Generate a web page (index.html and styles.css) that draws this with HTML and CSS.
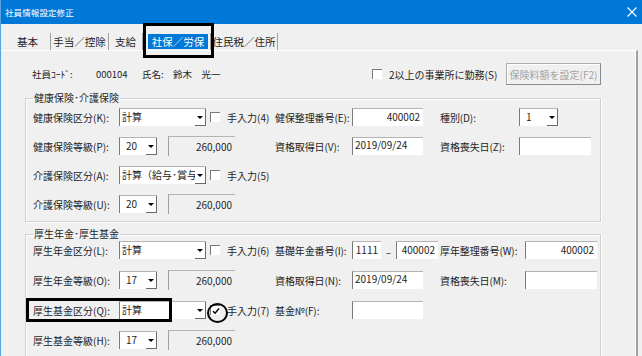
FILE: index.html
```html
<!DOCTYPE html>
<html lang="ja">

<head>
    <meta charset="UTF-8">
    <title>社員情報設定修正</title>
    <link rel="stylesheet" href="styles.css">
</head>

<body>
    <div class="window">
        <div class="titlebar">
            <span class="title">社員情報設定修正</span>
            <svg class="close" width="10" height="10" viewBox="0 0 10 10">
                <path d="M0.5 0.5 L9.5 9.5 M9.5 0.5 L0.5 9.5" stroke="#fff" stroke-width="1.1" fill="none" />
            </svg>
        </div>

        <div class="tabs">
            <span class="tab tab-kihon">基本</span>
            <span class="tab tab-teate">手当／控除</span>
            <span class="tab tab-shikyu">支給</span>
            <span class="tab tab-shaho"><span class="tab-sel">社保／労保</span></span>
            <span class="tab tab-jumin">住民税／住所</span>
        </div>

        <div class="page">
            <div class="info">
                <span class="info-key">社員ｺｰﾄﾞ:</span>
                <span class="info-code">000104</span>
                <span class="info-namekey">氏名:</span>
                <span class="info-name">鈴木　光一</span>
                <span class="chk"><span class="box"></span>2以上の事業所に勤務(S)</span>
                <button class="btn" disabled>保険料額を設定(F2)</button>
            </div>

            <!-- 健康保険・介護保険 -->
            <fieldset class="group group-health">
                <legend>健康保険･介護保険</legend>
                <div class="rows">
                    <div class="row">
                        <span class="lbl">健康保険区分(K):</span>
                        <span class="combo wide"><span class="val">計算</span><span class="drop"></span></span>
                        <span class="chk chk-cell"><span class="box"></span>手入力(4)</span>
                        <span class="lbl2">健保整理番号(E):</span>
                        <span class="txt num w71">400002</span>
                        <span class="lbl3">種別(D):</span>
                        <span class="combo kind"><span class="val">1</span><span class="drop"></span></span>
                    </div>
                    <div class="row">
                        <span class="lbl">健康保険等級(P):</span>
                        <span class="combo narrow"><span class="val">20</span><span class="drop"></span></span>
                        <span class="ro">260,000</span>
                        <span class="lbl2 after-ro">資格取得日(V):</span>
                        <span class="txt w71">2019/09/24</span>
                        <span class="lbl3">資格喪失日(Z):</span>
                        <span class="txt w72"></span>
                    </div>
                    <div class="row">
                        <span class="lbl">介護保険区分(A):</span>
                        <span class="combo wide"><span class="val">計算（給与･賞与）</span><span class="drop"></span></span>
                        <span class="chk chk-cell"><span class="box"></span>手入力(5)</span>
                    </div>
                    <div class="row">
                        <span class="lbl">介護保険等級(U):</span>
                        <span class="combo narrow"><span class="val">20</span><span class="drop"></span></span>
                        <span class="ro">260,000</span>
                    </div>
                </div>
            </fieldset>

            <!-- 厚生年金・厚生基金 -->
            <fieldset class="group group-pension">
                <legend>厚生年金･厚生基金</legend>
                <div class="rows">
                    <div class="row">
                        <span class="lbl">厚生年金区分(L):</span>
                        <span class="combo wide"><span class="val">計算</span><span class="drop"></span></span>
                        <span class="chk chk-cell"><span class="box"></span>手入力(6)</span>
                        <span class="lbl2">基礎年金番号(I):</span>
                        <span class="txt num w29">1111</span>
                        <span class="dash">–</span>
                        <span class="txt num w42">400002</span>
                        <span class="lbl3 lbl3-wide lbl3-tight">厚年整理番号(W):</span>
                        <span class="txt num w72">400002</span>
                    </div>
                    <div class="row">
                        <span class="lbl">厚生年金等級(O):</span>
                        <span class="combo narrow"><span class="val">17</span><span class="drop"></span></span>
                        <span class="ro">260,000</span>
                        <span class="lbl2 after-ro">資格取得日(N):</span>
                        <span class="txt w71">2019/09/24</span>
                        <span class="lbl3 lbl3-wide">資格喪失日(M):</span>
                        <span class="txt w72"></span>
                    </div>
                    <div class="row">
                        <span class="lbl">厚生基金区分(Q):</span>
                        <span class="combo wide"><span class="val">計算</span><span class="drop"></span></span>
                        <span class="chk chk-cell">
                            <span class="box">
                                <svg width="8" height="8" viewBox="0 0 8 8">
                                    <path d="M1 4.2 L3.1 6.3 L7 1.5" stroke="#000" stroke-width="1.4" fill="none" />
                                </svg>
                            </span>手入力(7)
                        </span>
                        <span class="lbl2">基金№(F):</span>
                        <span class="txt w71"></span>
                    </div>
                    <div class="row">
                        <span class="lbl">厚生基金等級(H):</span>
                        <span class="combo narrow"><span class="val">17</span><span class="drop"></span></span>
                        <span class="ro">260,000</span>
                    </div>
                </div>
            </fieldset>
        </div>

        <!-- 注記の枠 -->
        <div class="mark mark-tab"></div>
        <div class="mark mark-kikin"></div>
        <div class="mark mark-circle"></div>
    </div>
</body>

</html>
```

FILE: styles.css
```css
body {
    margin: 0;
    background: #f0f0f0;
    font-family: "Noto Sans CJK JP", "Noto Sans", sans-serif;
    font-size: 10px;
    color: #1e1e1e;
}

.window {
    position: relative;
    width: 641px;
    height: 356px;
    overflow: hidden;
    border-left: 1px solid #5aa2e0;
    background: #f0f0f0;
}

/* タイトルバー */
.titlebar {
    display: flex;
    align-items: center;
    justify-content: space-between;
    height: 24px;
    padding: 0 5px 0 4px;
    background: #0078d7;
    color: #fff;
}

.title {
    font-size: 8.5px;
    letter-spacing: 0.1px;
}

/* タブ */
.tabs {
    display: flex;
    height: 17px;
    margin-top: 9px;
    padding-left: 4px;
    line-height: 17px;
    font-size: 10.5px;
}

.tab {
    box-sizing: border-box;
    border-right: 1px solid #a0a0a0;
    text-align: center;
}

.tab-kihon { width: 46px; }
.tab-teate { width: 58px; }
.tab-shikyu { width: 34px; }
.tab-shaho { width: 68px; padding-left: 3px; }
.tab-jumin { width: 67px; }

.tab-sel {
    display: inline-block;
    padding: 0 4px;
    line-height: 15px;
    background: #0078d7;
    color: #fff;
}

/* タブページ */
.page {
    width: 635px;
    height: 305px;
    border-top: 1px solid #fff;
    border-right: 2px solid #a0a0a0;
    box-shadow: inset -1px 0 0 #fff;
}

.info {
    display: flex;
    align-items: center;
    height: 22px;
    padding: 12px 0 0 31px;
    font-size: 9.5px;
}

.info-key { width: 64px; }
.info-code { width: 46px; }
.info-namekey { width: 31px; }
.info-name { width: 199px; }

.info .chk {
    font-size: 10px;
}

.btn {
    box-sizing: border-box;
    width: 95px;
    height: 22px;
    margin: 0 35px 0 auto;
    padding: 0;
    border: 1px solid #adadad;
    border-right-color: #8a8a8a;
    border-bottom-color: #8a8a8a;
    box-shadow: inset 1px 1px 0 #fff;
    background: #f0f0f0;
    color: #a3a3a3;
    font-family: inherit;
    font-size: 10px;
}

/* グループ枠 */
.group {
    box-sizing: border-box;
    width: 576px;
    min-width: 0;
    margin: 6px 0 0 24px;
    padding: 0 0 8px 7px;
    border: 1px solid #d0d0d0;
    box-shadow: inset 1px 1px 0 #fff, 1px 1px 0 #fff;
}

.group legend {
    padding: 0 1px;
    line-height: 14px;
}

.group-pension {
    margin-top: 5px;
}

.rows {
    display: flex;
    flex-direction: column;
    gap: 11px;
    padding-top: 3px;
}

.group-pension .rows {
    gap: 12px;
    padding-top: 0;
}

.row {
    display: flex;
    align-items: center;
    height: 18px;
    white-space: nowrap;
}

.lbl { width: 86px; flex: none; }
.lbl2 { width: 77px; flex: none; }
.lbl2.after-ro { margin-left: 40px; }
.lbl3 { width: 79px; margin-left: 17px; flex: none; }
.lbl3.lbl3-wide { width: 85px; }
.lbl3.lbl3-tight { margin-left: 2px; }

.row .lbl2,
.row .lbl3 {
    letter-spacing: -0.1px;
}

/* コンボボックス */
.combo {
    display: flex;
    box-sizing: border-box;
    height: 18px;
    flex: none;
    background: #fff;
    border-left: 1px solid #7a7a7a;
    border-top: 1px solid #b4b4b4;
}

.combo .val {
    flex: 1;
    overflow: hidden;
    padding-left: 2px;
    line-height: 15px;
}

.combo.narrow .val,
.combo.kind .val {
    padding-left: 6px;
}

.drop {
    display: flex;
    align-items: center;
    justify-content: center;
    box-sizing: border-box;
    width: 11px;
    flex: none;
    border-right: 1px solid #6a6a6a;
    border-bottom: 1px solid #6a6a6a;
}

.drop::before {
    content: "";
    border-left: 3px solid transparent;
    border-right: 3px solid transparent;
    border-top: 3px solid #000;
}

.wide { width: 87px; }
.narrow { width: 38px; }
.kind { width: 39px; }

/* 読み取り専用 */
.ro {
    box-sizing: border-box;
    width: 67px;
    height: 20px;
    margin-left: 11px;
    flex: none;
    padding-right: 3px;
    border-left: 1px solid #a0a0a0;
    border-top: 1px solid #b4b4b4;
    text-align: right;
    line-height: 19px;
}

/* テキストボックス */
.txt {
    box-sizing: border-box;
    height: 18px;
    flex: none;
    padding: 0 2px;
    background: #fff;
    border-left: 1px solid #7a7a7a;
    border-top: 1px solid #b4b4b4;
    line-height: 14px;
}

.txt.num {
    text-align: right;
    padding-right: 3px;
    line-height: 16px;
}

.w29 { width: 29px; }
.w42 { width: 42px; }
.w71 { width: 71px; }
.w72 { width: 72px; }

.dash {
    width: 15px;
    flex: none;
    text-align: center;
    padding-top: 3px;
}

/* チェックボックス */
.chk {
    display: flex;
    align-items: center;
}

.chk-cell {
    box-sizing: border-box;
    width: 69px;
    padding-left: 4px;
    flex: none;
}

.box {
    display: flex;
    align-items: center;
    justify-content: center;
    box-sizing: border-box;
    width: 10px;
    height: 10px;
    margin-right: 7px;
    background: #fff;
    border-left: 1px solid #7a7a7a;
    border-top: 1px solid #7a7a7a;
}

/* 注記（黒枠・丸） */
.mark {
    position: absolute;
    box-sizing: border-box;
    border: 3px solid #000;
}

.mark-tab {
    left: 142px;
    top: 23px;
    width: 71px;
    height: 35px;
}

.mark-kikin {
    left: 25px;
    top: 298px;
    width: 146px;
    height: 24px;
}

.mark-circle {
    left: 206px;
    top: 303px;
    width: 21px;
    height: 20px;
    border-width: 2px;
    border-radius: 50%;
}
```
